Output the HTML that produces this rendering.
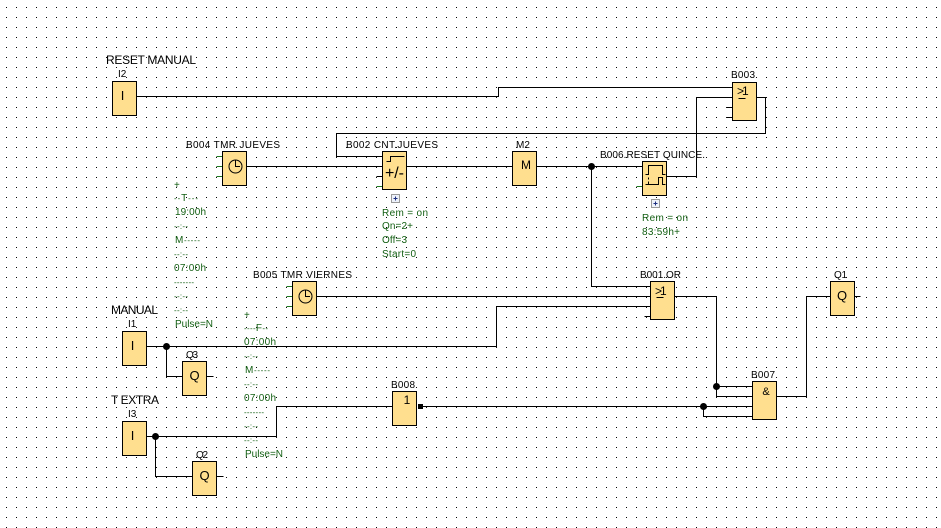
<!DOCTYPE html>
<html><head><meta charset="utf-8"><style>
html,body{margin:0;padding:0;background:#fff;width:941px;height:528px;overflow:hidden}
svg{display:block}
text{font-family:"Liberation Sans",sans-serif;font-size:10px;fill:#000}
.g text,text.g{fill:#146014}
.g tspan,.dash{font-size:8px}
.g text.dash{font-size:8px}
.l{font-size:12px}
.w path{fill:none;stroke:#000;stroke-width:1}
.sg path{fill:none;stroke:#1f7a1f;stroke-width:1}
.b rect{fill:#ffdf8f;stroke:#000;stroke-width:1}
.i text{font-size:13px}
</style></head><body>
<svg width="941" height="528" viewBox="0 0 941 528" xmlns="http://www.w3.org/2000/svg">
<defs><pattern id="d" width="10" height="10" patternUnits="userSpaceOnUse"><rect x="6" y="7" width="1" height="1" fill="#000"/></pattern></defs>
<rect width="941" height="528" fill="#fff"/>
<rect width="941" height="528" fill="url(#d)"/>

<g transform="translate(.5 .5)" shape-rendering="crispEdges">
<g class="w"><path d="M136 96H498V87H732"/>
<path d="M666 176H696V97H732M726 107H732M726 117H732"/>
<path d="M756 97H765V133H336V156H382"/>
<path d="M246 166H382M376 176H382M406 166H512M536 166H642"/>
<path d="M591 166V286H650M316 296H650M146 346H496V306H650M644 316H650"/>
<path d="M674 296H716V396H752M716 386H752M420 406H752M703 406V416H752"/>
<path d="M776 396H806V296H830M854 296H860"/>
<path d="M166 346V376H182M206 376H213"/>
<path d="M146 436H276V406H392M155 436V476H192M216 476H223"/></g>
<g class="sg"><path d="M216 156H222M216 166H222M216 176H222M376 186H382M636 186H642M286 286H292M286 296H292M286 306H292"/></g>
<g class="b">
<rect x="112" y="81" width="24" height="34"/>
<rect x="222" y="151" width="24" height="34"/>
<rect x="382" y="151" width="24" height="38"/>
<rect x="512" y="151" width="24" height="34"/>
<rect x="642" y="161" width="24" height="34"/>
<rect x="732" y="82" width="24" height="38"/>
<rect x="292" y="281" width="24" height="34"/>
<rect x="650" y="281" width="24" height="38"/>
<rect x="830" y="281" width="24" height="34"/>
<rect x="122" y="331" width="24" height="34"/>
<rect x="182" y="361" width="24" height="34"/>
<rect x="122" y="421" width="24" height="34"/>
<rect x="192" y="461" width="24" height="34"/>
<rect x="392" y="391" width="24" height="34"/>
<rect x="752" y="381" width="24" height="38"/>
</g>
<g class="w">
<path d="M386 161H390V156H404"/>
<path d="M645 174H648V165H662V174H665M645 184H658V177H662V184H665M648 177V179M648 181V184"/>
<path d="M738 98H745M656 297H663"/>
</g>
<rect x="391" y="194" width="8" height="8" fill="#eef2fa" stroke="#999"/>
<path d="M393 198H397M395 196V200" stroke="#1c2f80" fill="none"/>
<rect x="651" y="199" width="8" height="8" fill="#eef2fa" stroke="#999"/>
<path d="M653 203H657M655 201V205" stroke="#1c2f80" fill="none"/>
</g>

<g fill="none" stroke="#000">
<circle cx="235.5" cy="166.5" r="6.5"/><path d="M235.5 160V166.5H240"/>
<circle cx="305.5" cy="296.5" r="6.5"/><path d="M305.5 290V296.5H310"/>
</g>
<g fill="#000">
<circle cx="591.5" cy="166.5" r="3.5"/>
<circle cx="166.5" cy="346.5" r="3.5"/>
<circle cx="155.5" cy="436.5" r="3.5"/>
<circle cx="716.5" cy="386.5" r="3.5"/>
<circle cx="703.5" cy="406.5" r="3.5"/>
<rect x="418" y="404" width="5" height="5"/>
</g>

<g class="i">
<text x="122.5" y="100" text-anchor="middle">I</text>
<text x="132.5" y="350" text-anchor="middle">I</text>
<text x="132.5" y="440" text-anchor="middle">I</text>
<text x="526" y="169" text-anchor="middle" style="font-size:12px">M</text>
<text x="842" y="300" text-anchor="middle" style="font-size:13px">Q</text>
<text x="194.5" y="380" text-anchor="middle" style="font-size:13px">Q</text>
<text x="204.5" y="480" text-anchor="middle" style="font-size:13px">Q</text>
<text x="407" y="404" text-anchor="middle" style="font-size:12px">1</text>
<text x="766" y="395" text-anchor="middle" style="font-size:11px">&amp;</text>
<text x="737" y="95" style="font-size:12px">&gt;</text>
<text x="742" y="95" style="font-size:12px">1</text>
<text x="655" y="295" style="font-size:12px">&gt;</text>
<text x="660" y="295" style="font-size:12px">1</text>
<text x="385" y="178" textLength="19" style="font-size:16px">+/-</text>
</g>

<text class="l" x="106" y="64" textLength="90">RESET MANUAL</text>
<text class="l" x="111" y="314" textLength="47">MANUAL</text>
<text class="l" x="111" y="404" textLength="48">T EXTRA</text>
<text x="118" y="77">I2</text>
<text x="128" y="327">I1</text>
<text x="128" y="417">I3</text>
<text x="186" y="148" textLength="94">B004 TMR JUEVES</text>
<text x="346" y="148" textLength="92">B002 CNT.JUEVES</text>
<text x="516" y="148">M2</text>
<text x="731" y="78" textLength="24">B003</text>
<text x="600" y="158" textLength="105">B006.RESET QUINCE.</text>
<text x="253" y="278" textLength="99">B005 TMR VIERNES</text>
<text x="640" y="278" textLength="41">B001.OR</text>
<text x="834" y="278" textLength="13">Q1</text>
<text x="186" y="358" textLength="12">Q3</text>
<text x="196" y="458" textLength="12">Q2</text>
<text x="391" y="388" textLength="24">B008</text>
<text x="751" y="378" textLength="24">B007</text>

<g class="g">
<text x="382" y="216" textLength="46">Rem = on</text>
<text x="382" y="229" textLength="31">Qn=2+</text>
<text x="382" y="243" textLength="25">Off=3</text>
<text x="382" y="257" textLength="34">Start=0</text>
<text x="642" y="221" textLength="46">Rem = on</text>
<text x="642" y="235" textLength="38">83:59h+</text>

<text x="174" y="188">+</text>
<text x="174" y="201" textLength="24"><tspan>--</tspan>T<tspan>---</tspan></text>
<text x="175" y="215" textLength="31">19:00h</text>
<text class="dash" x="174" y="229" textLength="14">--:--</text>
<text x="175" y="243" textLength="25">M<tspan>-----</tspan></text>
<text class="dash" x="174" y="257" textLength="14">--:--</text>
<text x="174" y="271" textLength="32">07:00h</text>
<text class="dash" x="174" y="285" textLength="20">-------</text>
<text class="dash" x="174" y="299" textLength="14">--:--</text>
<text class="dash" x="174" y="313" textLength="14">--:--</text>
<text x="175" y="327" textLength="38">Pulse=N</text>

<text x="244" y="318">+</text>
<text x="244" y="331" textLength="24"><tspan>----</tspan>F<tspan>--</tspan></text>
<text x="244" y="345" textLength="32">07:00h</text>
<text class="dash" x="244" y="359" textLength="14">--:--</text>
<text x="245" y="373" textLength="25">M<tspan>-----</tspan></text>
<text class="dash" x="244" y="387" textLength="14">--:--</text>
<text x="244" y="401" textLength="32">07:00h</text>
<text class="dash" x="244" y="415" textLength="20">-------</text>
<text class="dash" x="244" y="429" textLength="14">--:--</text>
<text class="dash" x="244" y="443" textLength="14">--:--</text>
<text x="245" y="457" textLength="38">Pulse=N</text>
</g>
</svg>
</body></html>
